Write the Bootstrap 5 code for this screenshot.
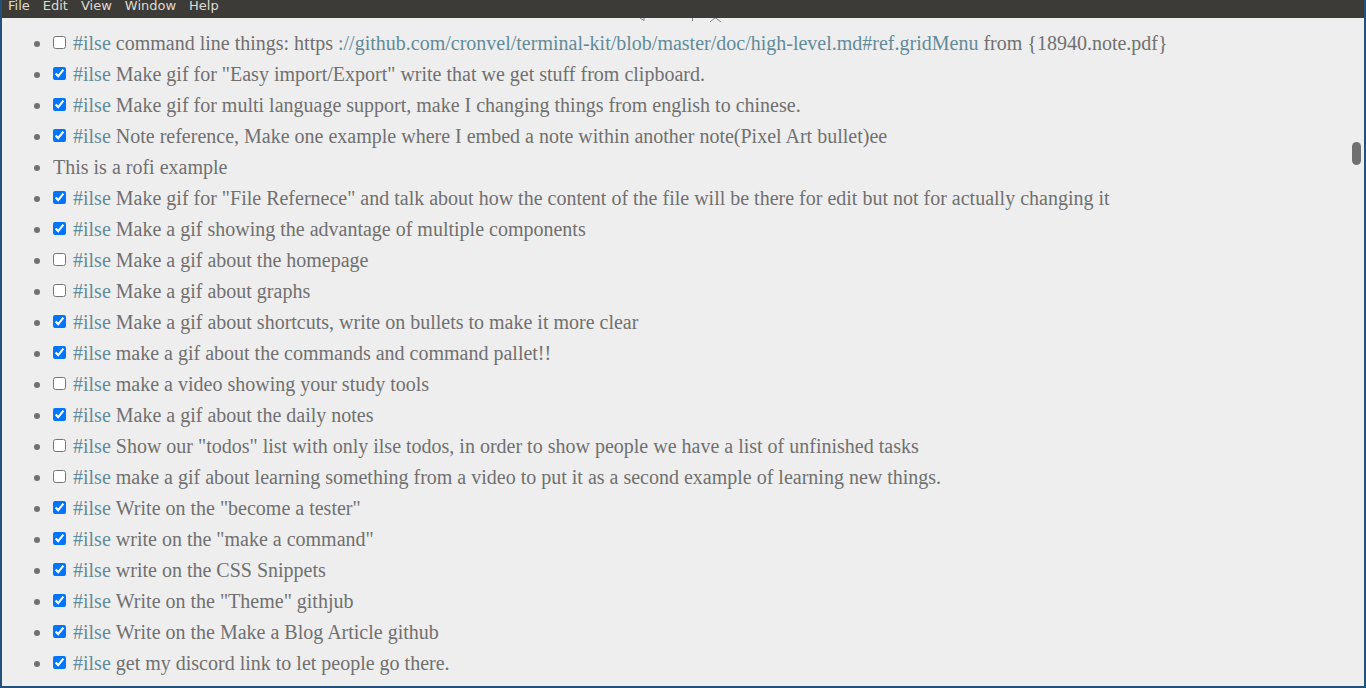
<!DOCTYPE html>
<html lang="en">
<head>
<meta charset="utf-8">
<meta name="viewport" content="width=device-width, initial-scale=1">
<title>Notes</title>
<link href="https://cdn.jsdelivr.net/npm/bootstrap@5.3.0/dist/css/bootstrap.min.css" rel="stylesheet">
<style>
body { font-family: "Liberation Serif", serif; font-size: 20px; line-height: 31px; color: #707070; background: #eee; }
.app-window { border: 2px solid #24517a; border-top: 0; }
.menu-bar { background: #3c3b37; height: 18px; padding-left: 6px; gap: 13px; }
.menu-bar button { font: 13px/12px "DejaVu Sans", sans-serif; color: #dfdbd2; height: 12px; }
.tool-edge { height: 10px; }
.todo-list { padding-left: 51px; }
.todo-list input { width: 13px; height: 13px; vertical-align: 1px; margin-right: 7px; }
a { color: #628b99; text-decoration: none; }
.scroll-thumb { width: 9px; height: 23px; top: 142px; right: 3px; background: #707070; }
</style>
</head>
<body>
<div class="app-window min-vh-100 position-relative d-flex flex-column">
<nav class="menu-bar d-flex align-items-start" aria-label="Application menu">
<button class="btn border-0 p-0" type="button">File</button>
<button class="btn border-0 p-0" type="button">Edit</button>
<button class="btn border-0 p-0" type="button">View</button>
<button class="btn border-0 p-0" type="button">Window</button>
<button class="btn border-0 p-0" type="button">Help</button>
</nav>
<main class="flex-grow-1">
<div class="tool-edge d-flex justify-content-center align-items-start">
<svg width="88" height="4" viewBox="0 0 88 4" fill="none" stroke="#7c8088" aria-hidden="true"><path d="M1 0l4 2.500V0M53.500 0v3M71 4l5-4h1l5 4"/></svg>
</div>
<ul class="todo-list mb-0">
<li><input type="checkbox" id="t1"><a href="#ilse">#ilse</a> <label for="t1">command line things: https</label> <a href="https://github.com/cronvel/terminal-kit/blob/master/doc/high-level.md#ref.gridMenu">://github.com/cronvel/terminal-kit/blob/master/doc/high-level.md#ref.gridMenu</a> from {18940.note.pdf}</li>
<li><input type="checkbox" id="t2" checked><a href="#ilse">#ilse</a> <label for="t2">Make gif for "Easy import/Export" write that we get stuff from clipboard.</label></li>
<li><input type="checkbox" id="t3" checked><a href="#ilse">#ilse</a> <label for="t3">Make gif for multi language support, make I changing things from english to chinese.</label></li>
<li><input type="checkbox" id="t4" checked><a href="#ilse">#ilse</a> <label for="t4">Note reference, Make one example where I embed a note within another note(Pixel Art bullet)ee</label></li>
<li>This is a rofi example</li>
<li><input type="checkbox" id="t5" checked><a href="#ilse">#ilse</a> <label for="t5">Make gif for "File Refernece" and talk about how the content of the file will be there for edit but not for actually changing it</label></li>
<li><input type="checkbox" id="t6" checked><a href="#ilse">#ilse</a> <label for="t6">Make a gif showing the advantage of multiple components</label></li>
<li><input type="checkbox" id="t7"><a href="#ilse">#ilse</a> <label for="t7">Make a gif about the homepage</label></li>
<li><input type="checkbox" id="t8"><a href="#ilse">#ilse</a> <label for="t8">Make a gif about graphs</label></li>
<li><input type="checkbox" id="t9" checked><a href="#ilse">#ilse</a> <label for="t9">Make a gif about shortcuts, write on bullets to make it more clear</label></li>
<li><input type="checkbox" id="t10" checked><a href="#ilse">#ilse</a> <label for="t10">make a gif about the commands and command pallet!!</label></li>
<li><input type="checkbox" id="t11"><a href="#ilse">#ilse</a> <label for="t11">make a video showing your study tools</label></li>
<li><input type="checkbox" id="t12" checked><a href="#ilse">#ilse</a> <label for="t12">Make a gif about the daily notes</label></li>
<li><input type="checkbox" id="t13"><a href="#ilse">#ilse</a> <label for="t13">Show our "todos" list with only ilse todos, in order to show people we have a list of unfinished tasks</label></li>
<li><input type="checkbox" id="t14"><a href="#ilse">#ilse</a> <label for="t14">make a gif about learning something from a video to put it as a second example of learning new things.</label></li>
<li><input type="checkbox" id="t15" checked><a href="#ilse">#ilse</a> <label for="t15">Write on the "become a tester"</label></li>
<li><input type="checkbox" id="t16" checked><a href="#ilse">#ilse</a> <label for="t16">write on the "make a command"</label></li>
<li><input type="checkbox" id="t17" checked><a href="#ilse">#ilse</a> <label for="t17">write on the CSS Snippets</label></li>
<li><input type="checkbox" id="t18" checked><a href="#ilse">#ilse</a> <label for="t18">Write on the "Theme" githjub</label></li>
<li><input type="checkbox" id="t19" checked><a href="#ilse">#ilse</a> <label for="t19">Write on the Make a Blog Article github</label></li>
<li><input type="checkbox" id="t20" checked><a href="#ilse">#ilse</a> <label for="t20">get my discord link to let people go there.</label></li>
</ul>
</main>
<div class="scroll-thumb position-absolute rounded-pill"></div>
</div>
<script src="https://cdn.jsdelivr.net/npm/bootstrap@5.3.0/dist/js/bootstrap.bundle.min.js"></script>
</body>
</html>
